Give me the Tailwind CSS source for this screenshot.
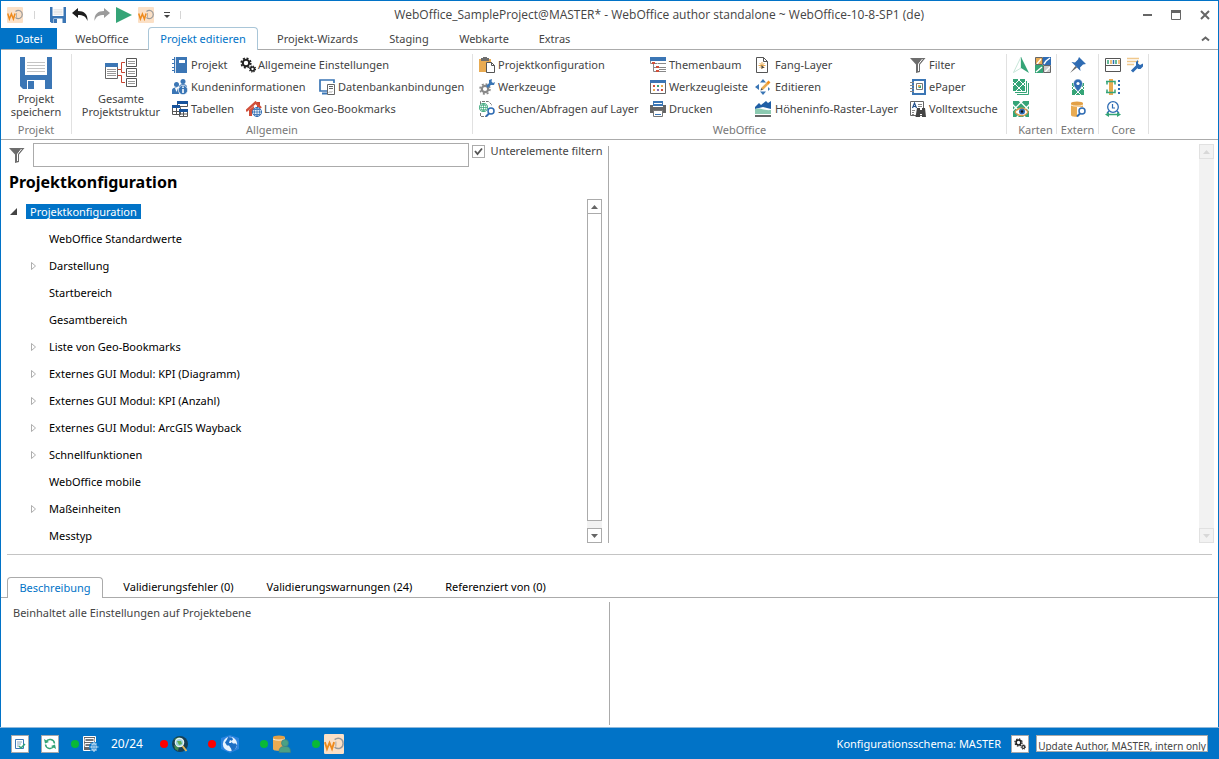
<!DOCTYPE html>
<html lang="de">

<head>
    <meta charset="UTF-8" />
    <meta name="viewport" content="width=device-width, initial-scale=1.0" />
    <title>WebOffice author standalone</title>
    <script src="https://cdn.jsdelivr.net/npm/@tailwindcss/browser@4"></script>
</head>

<body class="bg-white text-[#444] text-[11px] leading-4 font-['Noto_Sans','Open_Sans',sans-serif]">

    <!-- Shared icons -->
    <svg class="hidden" aria-hidden="true">
        <symbol id="logo" viewBox="0 0 16 16">
            <rect width="16" height="16" rx="1" fill="#fbe0c6" />
            <path d="M.7 6.500l1.700 5.500 2-5 2 5 1.700-5.500" fill="none" stroke="#ee8a1d" stroke-width="1.500" />
            <path d="M8.500 4.500c3-2.500 6.800-.5 6.800 3s-3.800 5.500-6.800 3" fill="none" stroke="#9a9a9a" stroke-width="1.200" />
            <path d="M9.500 10V6" stroke="#a5a5a5" stroke-width=".8" />
        </symbol>
        <symbol id="save" viewBox="0 0 32 32">
            <path d="M0 0h32v32H3l-3-3z" fill="#3b76b5" />
            <path d="M5 0h22v18H5zM7 23h18v9H7z" fill="#fff" />
            <path d="M7 5.500h18M7 8.500h18M7 11.500h18M7 14.500h18" stroke="#c4c4c4" stroke-width="1" />
            <path d="M8 24h6v8H8z" fill="#3b76b5" />
        </symbol>
        <symbol id="funnel" viewBox="0 0 16 16">
            <path d="M0 1h15.500L10 7.500V15l-4 1V7.500z" fill="#6d6d6d" />
            <path d="M12.500 2L8.500 7v7" fill="none" stroke="#fff" stroke-width="1" />
        </symbol>
        <symbol id="gears" viewBox="0 0 16 16">
            <g fill="none" stroke="#222">
                <circle cx="6" cy="6" r="3.200" stroke-width="2" />
                <circle cx="6" cy="6" r="4.800" stroke-width="1.600" stroke-dasharray="2 1.770" />
                <circle cx="12.500" cy="12" r="1.900" stroke-width="1.500" />
                <circle cx="12.500" cy="12" r="3" stroke-width="1.200" stroke-dasharray="1.200 1.156" />
            </g>
        </symbol>
        <symbol id="map" viewBox="0 0 12 12">
            <path d="M0 0h12v12H0z" fill="#35a477" />
            <path d="M-1 2l11 11M4-1l9 9M8-1L-1 8M13 2L2 13" stroke="#fff" stroke-width="1" fill="none" />
        </symbol>
        <symbol id="lens" viewBox="0 0 10 10">
            <circle cx="6" cy="4" r="3" fill="#fff" stroke="#2f6cb3" stroke-width="1.500" />
            <path d="M4 6.500L1 9.500" stroke="#2f6cb3" stroke-width="2" />
        </symbol>
        <symbol id="globe" viewBox="0 0 10 10">
            <circle cx="5" cy="5" r="4.500" fill="#fff" stroke="currentColor" />
            <path d="M5 .5v9M.5 5h9M1.500 2.500h7M1.500 7.500h7M5 .5C1.500 3 1.500 7 5 9.500M5 .5C8.500 3 8.500 7 5 9.500" fill="none" stroke="currentColor" stroke-width=".8" />
        </symbol>
        <symbol id="base" viewBox="0 0 16 16">
            <path d="M1 2v12c0 2.500 12 2.500 12 0V2z" fill="#e9ab52" />
            <ellipse cx="7" cy="2.200" rx="6" ry="1.800" fill="#e2a046" />
            <path d="M1 4c2 1.500 10 1.500 12 0" fill="none" stroke="#fff" stroke-width=".8" />
        </symbol>
    </svg>

    <div class="min-h-screen flex flex-col border border-b-0 border-[#0173c7]">

        <!-- Title bar -->
        <header class="h-[27px] flex items-center pl-[6px] pr-2">
            <div class="flex flex-1 items-center">
                <svg class="size-4"><use href="#logo" /></svg>
                <span class="w-px h-2 bg-[#d5d5d5] ml-[11px] mr-[15px]"></span>
                <div class="flex gap-[6px]">
                    <button aria-label="Speichern"><svg class="block size-4"><use href="#save" /></svg></button>
                    <button aria-label="Rückgängig"><svg class="block size-4" viewBox="0 0 16 16"><path d="M0 6l6-5v3c6 0 10 3 9.500 10C14 9.500 11 8 6 8v3z" fill="#1d1d1d" /></svg></button>
                    <button aria-label="Wiederholen"><svg class="block size-4" viewBox="0 0 16 16"><path d="M16 6l-6-5v3C4 4 0 7 .5 14 2 9.500 5 8 10 8v3z" fill="#9b9b9b" /></svg></button>
                    <button aria-label="Starten"><svg class="block size-4" viewBox="0 0 16 16"><path d="M0 0l16 8-16 8z" fill="#35a477" /></svg></button>
                    <button aria-label="WebOffice"><svg class="block size-4"><use href="#logo" /></svg></button>
                </div>
                <button aria-label="Anpassen" class="ml-[10px]"><svg class="block w-[6px] h-2" viewBox="0 0 6 8"><path d="M0 1.500h6" stroke="#444" /><path d="M0 4h6L3 7z" fill="#444" /></svg></button>
                <span class="w-px h-2 bg-[#d5d5d5] ml-[10px]"></span>
            </div>
            <h1 class="text-[12px] font-['Open_Sans','Noto_Sans',sans-serif]">WebOffice_SampleProject@MASTER* - WebOffice author standalone ~ WebOffice-10-8-SP1 (de)</h1>
            <div class="w-[286px] flex items-center justify-end gap-[19px]">
                <button aria-label="Minimieren"><svg class="block size-[9px]" viewBox="0 0 9 9"><path d="M0 5h9" stroke="#666" stroke-width="2" /></svg></button>
                <button aria-label="Maximieren"><svg class="block size-[10px]" viewBox="0 0 10 10"><path d="M.5 2v7.500h9V2" fill="none" stroke="#666" /><path d="M0 1.500h10" stroke="#666" stroke-width="3" /></svg></button>
                <button aria-label="Schließen"><svg class="block size-[10px]" viewBox="0 0 10 10"><path d="M1 1l8 8M9 1L1 9" stroke="#666" stroke-width="2" /></svg></button>
            </div>
        </header>

        <!-- Ribbon tabs -->
        <nav class="h-[22px] flex border-b border-[#ababab]">
            <button class="w-14 bg-[#0173c7] text-white">Datei</button>
            <button class="w-[90px]">WebOffice</button>
            <button class="w-[110px] ml-px h-[23px] -mt-px border border-b-0 border-[#a9c6d8] rounded-t bg-white text-[#0173c7] relative">Projekt editieren</button>
            <button class="w-[119px]">Projekt-Wizards</button>
            <button class="w-16">Staging</button>
            <button class="w-[86px]">Webkarte</button>
            <button class="w-[55px]">Extras</button>
            <button aria-label="Menüband einklappen" class="ml-auto mr-2"><svg class="block w-[9px] h-2" viewBox="0 0 9 8"><path d="M1 5.500l3.500-3 3.500 3" fill="none" stroke="#666" stroke-width="2" /></svg></button>
        </nav>

        <!-- Ribbon -->
        <div class="h-[90px] flex pt-1 pb-[5px] border-b border-[#ababab] whitespace-nowrap">
            <section class="w-[71px] flex flex-col justify-between items-center border-r border-[#e1e1e1]">
                <button class="flex flex-col items-center leading-[13px] pt-[3px]"><svg class="size-8 mb-[3px]"><use href="#save" /></svg>Projekt<br>speichern</button>
                <h2 class="text-[#777] leading-[14px] -mb-[3px]">Projekt</h2>
            </section>

            <section class="w-[401px] flex flex-col justify-between border-r border-[#e1e1e1]">
                <div class="flex">
                    <button class="w-[98px] mr-[2px] flex flex-col items-center leading-[13px] pt-[3px]">
                        <svg class="size-8 mb-[3px]" viewBox="0 0 32 32">
                            <path d="M.5 7.500h12v14H.5z" fill="#fff" stroke="#666" />
                            <path d="M0 6h13v4H0z" fill="#3b76b5" />
                            <path d="M2 12.500h9M2 14.500h9M2 16.500h9M2 18.500h9" stroke="#999" />
                            <path d="M13 12.500h3.500v-7H20M16.500 12.500v3H20M13 18.500h3.500v7H20" fill="none" stroke="#c9432f" />
                            <g fill="#fff" stroke="#555"><path d="M21.500 1.500h10v8h-10zM21.500 11.500h10v8h-10zM21.500 21.500h10v8h-10z" /></g>
                            <path d="M23 4.500h7M23 6.500h7M23 14.500h7M23 16.500h7M23 24.500h7M23 26.500h7" stroke="#999" />
                        </svg>
                        Gesamte<br>Projektstruktur</button>
                    <div>
                        <div class="flex h-[22px]">
                            <button class="w-[68px] flex items-center gap-[3px]">
                                <svg class="size-4" viewBox="0 0 16 16"><path d="M2 0h13v16H2z" fill="#3b76b5" /><path d="M0 2.500h4M0 6.500h4M0 10.500h4M0 13.500h4" stroke="#3b76b5" /><path d="M3.500 0v16" stroke="#fff" stroke-width=".8" /><path d="M7 3h6v3H7z" fill="#fff" /></svg>
                                Projekt</button>
                            <button class="flex items-center gap-[2px]"><svg class="size-4"><use href="#gears" /></svg>Allgemeine Einstellungen</button>
                        </div>
                        <div class="flex h-[22px]">
                            <button class="w-[147px] flex items-center gap-[3px]">
                                <svg class="size-4" viewBox="0 0 16 16"><g fill="#3b76b5"><circle cx="11" cy="2.500" r="2.500" /><path d="M7 8c0-4 8-4 8 0z" /><circle cx="4.500" cy="5.500" r="2.500" /><path d="M0 15V11c0-3.500 7-3.500 7 0v4z" /></g><path d="M3 9l1.500 4L6 9z" fill="#fff" /><circle cx="11" cy="11" r="4.700" fill="#3b76b5" stroke="#fff" stroke-width=".7" /><path d="M11 7.500v1.500M11 10v4" stroke="#fff" stroke-width="1.600" /></svg>
                                Kundeninformationen</button>
                            <button class="flex items-center gap-[3px]">
                                <svg class="size-4" viewBox="0 0 16 16"><path d="M8 12H1V1h14v3" fill="none" stroke="#3b76b5" stroke-width="1.700" /><path d="M3 14.500h5" stroke="#3b76b5" stroke-width="2" /><path d="M8.500 5.500h7v10h-7z" fill="#fff" stroke="#666" /><path d="M10 7.500h4M10 9.500h4M10 13.500l1-1M12 13.500l1-1" stroke="#666" /></svg>
                                Datenbankanbindungen</button>
                        </div>
                        <div class="flex h-[22px]">
                            <button class="w-[74px] flex items-center gap-[3px]">
                                <svg class="size-4" viewBox="0 0 16 16"><g fill="#fff" stroke="#555"><path d="M5.500 1.500h10v4h-10zM.5 6.500h8v7h-8zM7.500 9.500h8v6h-8z" /><path d="M4.500 6v7M0 10.500h7M11.500 9v7M8 13h7" /></g><path d="M5 0h11v3H5zM0 4h8v3H0zM7 8h9v3H7z" fill="#17539c" /></svg>
                                Tabellen</button>
                            <button class="flex items-center gap-[2px]">
                                <svg class="size-4" viewBox="0 0 16 16"><path d="M11 1h3v5h-3z" fill="#c9432f" /><path d="M0 10L9.500 1.500 15 7" fill="none" stroke="#d14f3a" stroke-width="2.400" /><path d="M3 9l5-4v3l-2 3v4H3z" fill="#d14f3a" /><use href="#globe" x="6" y="6" width="10" height="10" color="#2f6cb3" /></svg>
                                Liste von Geo-Bookmarks</button>
                        </div>
                    </div>
                </div>
                <h2 class="text-[#777] leading-[14px] -mb-[3px] text-center">Allgemein</h2>
            </section>

            <section class="w-[534px] flex flex-col justify-between border-r border-[#e1e1e1]">
                <div class="grid grid-cols-[171px_105px_155px_auto] pl-[6px]">
                    <button class="h-[22px] flex items-center gap-[3px]">
                        <svg class="size-4" viewBox="0 0 16 16"><path d="M0 2h12v13H0z" fill="#e9ab52" /><path d="M2 1h2V0h4v1h2v3H2z" fill="#6d6d6d" /><path d="M7.500 5.500h5l3 3v7h-8z" fill="#fff" stroke="#555" /><path d="M12.500 5.500v3h3" fill="none" stroke="#555" /></svg>
                        Projektkonfiguration</button>
                    <button class="h-[22px] flex items-center gap-[3px]">
                        <svg class="size-4" viewBox="0 0 16 16"><path d="M0 0h16v4H0z" fill="#3b76b5" /><path d="M.5 4v2.500h7M3.500 7v7.500H8M3.500 10.500H8" fill="none" stroke="#888" /><path d="M8 6.500h8M9 10.500h7M9 12.500h7M9 14.500h7" stroke="#888" /><path d="M2 5h3v2H2zM6 9h3v2H6zM6 13h3v2H6z" fill="#d14f3a" /></svg>
                        Themenbaum</button>
                    <button class="h-[22px] flex items-center gap-1">
                        <svg class="size-4" viewBox="0 0 16 16"><path d="M1.500.500h7l4 4v11h-11z" fill="#fff" stroke="#555" /><path d="M8.500.500v4h4" fill="none" stroke="#555" /><path d="M7 5v7M3.500 8.500h7M4.500 6l5 5M9.500 6l-5 5" stroke="#e9ab52" /><path d="M6.500 8l3 3h-2l-1 1z" fill="#444" /></svg>
                        Fang-Layer</button>
                    <button class="h-[22px] flex items-center gap-[3px]"><svg class="size-4"><use href="#funnel" /></svg>Filter</button>

                    <button class="h-[22px] flex items-center gap-[3px]">
                        <svg class="size-4" viewBox="0 0 16 16"><circle cx="6" cy="10" r="3.200" fill="none" stroke="#888" stroke-width="2.200" /><circle cx="6" cy="10" r="5" fill="none" stroke="#888" stroke-width="1.500" stroke-dasharray="2 1.927" /><path d="M8 8l4-4" stroke="#3b76b5" stroke-width="2.500" /><path d="M10 1v3l2 2h3l1-3-2 1-1.500-1.500L13 0z" fill="#3b76b5" /></svg>
                        Werkzeuge</button>
                    <button class="h-[22px] flex items-center gap-[3px]">
                        <svg class="size-4" viewBox="0 0 16 16"><path d="M.5 1.500h15v13H.5z" fill="#fff" stroke="#666" /><path d="M0 1h16v3H0z" fill="#3b76b5" /><path d="M3 6h2v2H3z" fill="#d14f3a" /><path d="M7 6h2v2H7z" fill="#35a477" /><path d="M11 6h2v2h-2z" fill="#e9ab52" /><path d="M3 10h2v2H3z" fill="#e9ab52" /><path d="M7 10h2v2H7z" fill="#8b6bb5" /><path d="M11 10h2v2h-2z" fill="#d14f3a" /></svg>
                        Werkzeugleiste</button>
                    <button class="h-[22px] flex items-center gap-1">
                        <svg class="size-4" viewBox="0 0 16 16"><path d="M0 8l4-3v6zM8 0l3 3.500H5zM8 16l-3-3.500h6z" fill="#3b76b5" /><path d="M13 8l2 2-2 2z" fill="#3b76b5" /><path d="M7 10l6-6" stroke="#e9ab52" stroke-width="2.600" /><path d="M12.500 4.500l2-2" stroke="#f28f1c" stroke-width="2.600" /><path d="M5.500 11.500l.7-2.500 1.800 1.800z" fill="#555" /></svg>
                        Editieren</button>
                    <button class="h-[22px] flex items-center gap-[3px]">
                        <svg class="size-4" viewBox="0 0 16 16"><path d="M3 1h12v14H3z" fill="#fff" stroke="#3b76b5" stroke-width="2" /><path d="M0 3.500h4M0 6.500h4M0 9.500h4M0 12.500h4" stroke="#888" /><path d="M6.500 4.500h6v6h-6z" fill="none" stroke="#777" /><path d="M8 9l3-3v3z" fill="#35a477" /><path d="M8 6h2v2H8z" fill="#e9ab52" /></svg>
                        ePaper</button>

                    <button class="h-[22px] flex items-center gap-[3px]">
                        <svg class="size-4" viewBox="0 0 16 16"><path d="M1.500 3V.500h8l3 3V5M1.500 12v3.500h6" fill="none" stroke="#777" stroke-dasharray="3 1" /><g color="#35a477"><use href="#globe" width="9" height="9" y="2" /></g><use href="#lens" x="6" y="6" width="10" height="10" /></svg>
                        Suchen/Abfragen auf Layer</button>
                    <button class="h-[22px] flex items-center gap-[3px]">
                        <svg class="size-4" viewBox="0 0 16 16"><path d="M3 0h10v5H3z" fill="#3b76b5" /><path d="M4 2.500h8" stroke="#fff" /><path d="M0 4h3v2h10V4h3v8H0z" fill="#666" /><path d="M3.500 9.500h9v6h-9z" fill="#fff" stroke="#777" /><path d="M5 13.500h6" stroke="#3b76b5" /></svg>
                        Drucken</button>
                    <button class="h-[22px] flex items-center gap-1">
                        <svg class="size-4" viewBox="0 0 16 16"><path d="M0 6l4-4 2 2 5-4 2 2 3-2v8L8 6 0 8z" fill="#1f5ea5" /><path d="M0 8c5-2 9 2 16 1v4H0z" fill="#8ccab1" /><path d="M0 15h16" stroke="#666" stroke-width="2" /></svg>
                        Höheninfo-Raster-Layer</button>
                    <button class="h-[22px] flex items-center gap-[3px]">
                        <svg class="size-4" viewBox="0 0 16 16"><path d="M.5.500h13v14H.5z" fill="#fff" stroke="#666" /><path d="M2.500 7l2-5 2 5M3 5.500h3" fill="none" stroke="#1f4e8a" stroke-width="1.200" /><path d="M8 3.500h4M8 5.500h4M2 9.500h3M2 11.500h2M2 13.500h2" stroke="#888" /><path d="M7 7h3v2h2V7h3l1 9h-4v-3h-2v3H5.500z" fill="#444" /></svg>
                        Volltextsuche</button>
                </div>
                <h2 class="text-[#777] leading-[14px] -mb-[3px] text-center">WebOffice</h2>
            </section>

            <section class="w-[50px] flex flex-col justify-between border-r border-[#e1e1e1]">
                <div class="grid grid-cols-[22px_16px] gap-y-[6px] pl-[6px] pt-[3px]">
                    <button aria-label="Norden"><svg class="block size-4" viewBox="0 0 16 16"><path d="M8 0v11L.5 15.500z" fill="#fff" stroke="#b9dfcf" stroke-width=".8" /><path d="M8 0l8 16-8-5z" fill="#35a477" /></svg></button>
                    <button aria-label="Kacheln"><svg class="block size-4" viewBox="0 0 16 16"><path d="M.5.500h7v7h-7z" fill="#e9ab52" /><path d="M8 0h8v8H8z" fill="#2f6cb3" /><path d="M0 8h8v8H0z" fill="#35a477" /><path d="M8.500 8.500h7v7h-7z" fill="#ccc" /><path d="M2 7l4-5M9 7l2-3 4-3M1 15l6-5M10 15l5-5" fill="none" stroke="#fff" stroke-width="1.400" /><path d="M.5.500h7v7h-7zM8.500 8.500h7v7h-7z" fill="none" stroke="#666" /></svg></button>
                    <button aria-label="Kartendienste"><svg class="block size-4" viewBox="0 0 16 16"><use href="#map" width="12" height="12" /><path d="M13.500 2v11.500H2M15.500 4v11.500H4" fill="none" stroke="#35a477" /></svg></button>
                    <span></span>
                    <button aria-label="Kartenansicht"><svg class="block size-4" viewBox="0 0 16 16"><use href="#map" width="16" height="16" /><path d="M2 11c3-5 10-5 13 0-3 5-10 5-13 0z" fill="#fff" stroke="#dd9848" stroke-width="1.300" /><circle cx="9" cy="10.500" r="3" fill="#2f6cb3" /><circle cx="9" cy="10.500" r="1.200" fill="#111" /></svg></button>
                </div>
                <h2 class="text-[#777] leading-[14px] -mb-[3px] pl-2 text-center">Karten</h2>
            </section>

            <section class="w-[42px] flex flex-col justify-between border-r border-[#e1e1e1]">
                <div class="flex flex-col items-center gap-[6px] pt-[3px]">
                    <button aria-label="Anheften"><svg class="block size-4" viewBox="0 0 16 16"><path d="M0 16l5.500-7L7 10.500z" fill="#666" /><path d="M9 0l7 7-3 .5-3 3 .5 3.500-9-9 3.500.5 3-3z" fill="#2f6cb3" /></svg></button>
                    <button aria-label="Standort"><svg class="block size-4" viewBox="0 0 16 16"><use href="#map" x="2" y="4" width="12" height="12" /><path d="M8 13C5 8.500 3.500 7 3.500 4.500a4.500 4.500 0 0 1 9 0C12.500 7 11 8.500 8 13z" fill="#2f6cb3" stroke="#fff" stroke-width=".6" /><circle cx="8" cy="4.500" r="1.600" fill="#fff" /></svg></button>
                    <button aria-label="Datenbanksuche"><svg class="block size-4" viewBox="0 0 16 16"><use href="#base" width="16" height="16" /><path d="M7 16V6h9v10z" fill="#fff" /><use href="#lens" x="6" y="6" width="10" height="10" /></svg></button>
                </div>
                <h2 class="text-[#777] leading-[14px] -mb-[3px] text-center">Extern</h2>
            </section>

            <section class="w-[50px] flex flex-col justify-between border-r border-[#e1e1e1]">
                <div class="grid grid-cols-[22px_16px] gap-y-[6px] pl-[6px] pt-[3px]">
                    <button aria-label="Layout"><svg class="block size-4" viewBox="0 0 16 16"><path d="M.5 1.500h15v13H.5zM0 8.500h16" fill="#fff" stroke="#555" /><path d="M3 3v4M11 3v4" stroke="#35a477" stroke-width="1.500" /><path d="M6 3v4M14 3v4" stroke="#e9ab52" stroke-width="1.500" /><path d="M8.500 3v4" stroke="#2f6cb3" stroke-width="1.500" /></svg></button>
                    <button aria-label="Einstellungen"><svg class="block size-4" viewBox="0 0 16 16"><path d="M0 1.500h12M0 4.500h12M0 7.500h7" stroke="#f0c88d" stroke-width="1.700" /><path d="M5 14.500l6-6" stroke="#2f6cb3" stroke-width="3" /><path d="M9 9V5l2-2v3.500l2 1.500 3-1.500v3L13.500 12H11z" fill="#2f6cb3" /></svg></button>
                    <button aria-label="Ausrichten"><svg class="block size-4" viewBox="0 0 16 16"><path d="M4 0h4v16H4z" fill="#e9ab52" /><path d="M1 2.500h9v3M1 13.500h9v-3M2 2.500v3M2 13.500v-3" fill="none" stroke="#35a477" stroke-width="1.500" /><path d="M14 1v15" stroke="#2f6cb3" stroke-width="2" stroke-dasharray="2 2" /></svg></button>
                    <span></span>
                    <button aria-label="Zeitplan"><svg class="block size-4" viewBox="0 0 16 16"><circle cx="8" cy="6" r="5.300" fill="#fff" stroke="#2f6cb3" stroke-width="1.300" /><path d="M7.500 3v4H10M4 10l-2 2M12 10l2 2" fill="none" stroke="#2f6cb3" stroke-width="1.200" /><path d="M2 13.500h12" stroke="#35a477" stroke-width="1.500" /><path d="M0 13.500L4 11v5zM16 13.500L12 11v5z" fill="#35a477" /></svg></button>
                </div>
                <h2 class="text-[#777] leading-[14px] -mb-[3px] text-center">Core</h2>
            </section>
        </div>

        <!-- Work area -->
        <main class="flex pt-1 pb-2">
            <div class="w-[calc(50%-2px)]">
                <div class="flex h-[22px] items-start -mt-px pl-2">
                    <label for="filter" class="pt-1"><svg class="block size-4"><use href="#funnel" /></svg><span class="sr-only">Filter</span></label>
                    <input id="filter" type="text" class="flex-1 h-6 ml-2 border border-[#ababab] px-1">
                    <label class="flex items-center ml-[3px] mr-[5px] mt-[1px] gap-[6px] h-[14px]">
                        <span class="relative block size-[13px]">
                            <input type="checkbox" checked class="block appearance-none size-[13px] border border-[#ababab] bg-white">
                            <svg class="absolute inset-0 size-[13px] pointer-events-none" viewBox="0 0 13 13"><path d="M3 6l2.500 3L10 3.500" fill="none" stroke="#555" stroke-width="1.800" /></svg>
                        </span>
                        Unterelemente filtern
                    </label>
                </div>
                <h2 class="mt-[5px] pl-2 text-[16px] leading-6 font-bold text-black">Projektkonfiguration</h2>

                <!-- Tree -->
                <div class="flex mt-[5px]">
                    <ul id="tree" class="flex-1 -mt-px -mb-2 text-black"></ul>
                    <div class="w-[15px] h-[344px] mr-[6px] bg-[#f2f2f2] flex flex-col">
                        <button aria-label="Nach oben" class="h-[15px] border border-[#ababab] bg-white flex items-center justify-center"><svg class="w-[7px] h-1" viewBox="0 0 7 4"><path d="M0 4h7L3.500 0z" fill="#666" /></svg></button>
                        <div class="h-[307px] border border-t-0 border-[#ababab] bg-white"></div>
                        <button aria-label="Nach unten" class="mt-auto h-[15px] border border-[#ababab] bg-white flex items-center justify-center"><svg class="w-[7px] h-1" viewBox="0 0 7 4"><path d="M0 0h7L3.500 4z" fill="#666" /></svg></button>
                    </div>
                </div>
            </div>
            <div class="flex-1 flex border-l border-[#ababab] mt-[2px]">
                <div class="w-[15px] h-[399px] -mt-[2px] ml-auto mr-1 bg-[#f2f2f2] flex flex-col justify-between">
                    <button aria-label="Nach oben" disabled class="h-[15px] border border-[#e1e1e1] flex items-center justify-center"><svg class="w-[7px] h-1" viewBox="0 0 7 4"><path d="M0 4h7L3.500 0z" fill="#d8d8d8" /></svg></button>
                    <button aria-label="Nach unten" disabled class="h-[15px] border border-[#e1e1e1] flex items-center justify-center"><svg class="w-[7px] h-1" viewBox="0 0 7 4"><path d="M0 0h7L3.500 4z" fill="#d8d8d8" /></svg></button>
                </div>
            </div>
        </main>
        <hr class="mx-[6px] mt-[3px] border-[#c4c4c4]">

        <!-- Detail tabs -->
        <div class="flex mt-[22px] h-[21px] pl-[6px] border-b border-[#ababab] text-black">
            <button class="w-24 h-[21px] border border-b-0 border-[#ababab] rounded-t bg-white text-[#0173c7] relative">Beschreibung</button>
            <button class="w-[151px]">Validierungsfehler (0)</button>
            <button class="w-[171px]">Validierungswarnungen (24)</button>
            <button class="w-[141px]">Referenziert von (0)</button>
        </div>
        <div class="flex-1 flex pt-1 pb-[2px]">
            <p class="w-[calc(50%-1px)] pl-3 pt-[3px]">Beinhaltet alle Einstellungen auf Projektebene</p>
            <div class="flex-1 border-l border-[#ababab]"></div>
        </div>

        <!-- Status bar -->
        <footer class="h-8 -mx-px flex items-center bg-[#0173c7] text-white border-t border-[#8fb9dc] pl-[11px] pr-[11px]">
            <div class="flex items-center">
                <button aria-label="Prüfen" class="size-[18px] bg-white border border-[#a9a9a9] flex items-center justify-center"><svg class="size-3" viewBox="0 0 12 12"><path d="M1.500 1.500h8v9h-8z" fill="none" stroke="#3b76b5" /><path d="M3 4h5M3 6h4M3 8h2" stroke="#8da9c4" /><path d="M5 8l2 2 4-4" fill="none" stroke="#35a477" stroke-width="1.500" /></svg></button>
                <button aria-label="Aktualisieren" class="ml-3 size-[18px] bg-white border border-[#a9a9a9] flex items-center justify-center"><svg class="size-3" viewBox="0 0 12 12"><path d="M10.500 5.500A4.500 4.500 0 0 0 2 4M1.500 6.500A4.500 4.500 0 0 0 10 8" fill="none" stroke="#35a477" stroke-width="1.500" /><path d="M0 1l1 4.500L5 4zM12 11l-1-4.500L7 8z" fill="#35a477" /></svg></button>
                <span class="ml-3 size-2 rounded-full bg-[#09b838]"></span>
                <svg class="ml-1 size-4" viewBox="0 0 16 16"><path d="M.5.500h12v14H.5z" fill="#666" stroke="#fff" /><path d="M2 2.500h9v3H2zM2 7.500h9v3H2z" fill="#777" stroke="#fff" /><circle cx="11" cy="11" r="5" fill="#0173c7" /><path d="M11 6.500v9M6.500 11h9M8 8h6M8 14h6M11 6.500c-3 3-3 6 0 9M11 6.500c3 3 3 6 0 9" fill="none" stroke="#dceaf6" stroke-width=".8" /></svg>
                <span class="w-[61px] pl-3 text-[12px]">20/24</span>
                <span class="size-2 rounded-full bg-[#fe0000]"></span>
                <svg class="ml-1 size-4" viewBox="0 0 16 16"><circle cx="8" cy="8" r="8" fill="#173f55" /><path d="M2 3l5-2 4 2-5 3zM2 9l5 2-1 4-3-2z" fill="#448b52" /><circle cx="7.500" cy="6.500" r="4.200" fill="#9bd0dc" stroke="#e8f2f2" stroke-width="1.200" /><path d="M5 5h4l1 3-3 1z" fill="#5fae55" /><path d="M10.500 10l4 5" stroke="#e4b85a" stroke-width="2" /></svg>
                <span class="ml-5 size-2 rounded-full bg-[#fe0000]"></span>
                <svg class="ml-[5px] size-[18px]" viewBox="0 0 18 18"><path d="M9 0l9 3v11l-9 4-9-4V3z" fill="#2a83df" /><circle cx="9" cy="9" r="7.200" fill="#e7f3fe" /><path d="M7 2l4 .5 1 2-2 2 2 2 3 0 1 2-2 4-3 2-1-3-2-3-2 0-2-3 2-3z" fill="#1d6fc4" /><path d="M9 5l2 1-1 2H8z" fill="#e7f3fe" /></svg>
                <span class="ml-[21px] size-2 rounded-full bg-[#09b838]"></span>
                <svg class="ml-[5px] size-[18px]" viewBox="0 0 18 18"><use href="#base" width="16" height="16" x="-1" /><g fill="#4ba184" stroke="#3c7f85" stroke-width=".7"><path d="M6 17.500c0-5 2-6 6-6s5.500 1 5.500 6z" /><circle cx="12" cy="8" r="3.500" /></g></svg>
                <span class="ml-[21px] size-2 rounded-full bg-[#09b838]"></span>
                <svg class="ml-1 size-5"><use href="#logo" /></svg>
            </div>
            <div class="ml-auto flex items-center">
                <span>Konfigurationsschema: MASTER</span>
                <button aria-label="Schema einstellen" class="ml-[10px] size-[18px] bg-white border border-[#a9a9a9] flex items-center justify-center"><svg class="size-3"><use href="#gears" /></svg></button>
                <div class="ml-[7px] w-[172px] h-[17px] overflow-hidden bg-white border border-[#a9a9a9] text-[#444] text-[10px] text-center pt-[2px] whitespace-nowrap">Update Author, MASTER, intern only</div>
            </div>
        </footer>
    </div>

    <!-- Tree entries -->
    <script>
        const entries = [
            { text: 'WebOffice Standardwerte' },
            { text: 'Darstellung', children: true },
            { text: 'Startbereich' },
            { text: 'Gesamtbereich' },
            { text: 'Liste von Geo-Bookmarks', children: true },
            { text: 'Externes GUI Modul: KPI (Diagramm)', children: true },
            { text: 'Externes GUI Modul: KPI (Anzahl)', children: true },
            { text: 'Externes GUI Modul: ArcGIS Wayback', children: true },
            { text: 'Schnellfunktionen', children: true },
            { text: 'WebOffice mobile' },
            { text: 'Maßeinheiten', children: true },
            { text: 'Messtyp' }
        ];

        let treeHTML = `<li class="h-[27px] flex items-center pl-[9px]">
            <svg class="size-[7px]" viewBox="0 0 7 7"><path d="M7 0v7H0z" fill="#444" /></svg>
            <span class="ml-[9px] px-1 h-[15px] leading-[15px] bg-[#0173c7] text-white">Projektkonfiguration</span></li>`;
        entries.forEach(entry => {
            const arrow = entry.children ? '<svg class="w-[5px] h-2" viewBox="0 0 5 8"><path d="M.5.500v7L4.500 4z" fill="#fff" stroke="#999" stroke-width=".8" /></svg>' : '';
            treeHTML += `<li class="h-[27px] flex items-center pl-[30px]"><span class="w-[18px]">${arrow}</span>${entry.text}</li>`;
        });
        document.getElementById('tree').innerHTML = treeHTML;
    </script>
</body>

</html>
